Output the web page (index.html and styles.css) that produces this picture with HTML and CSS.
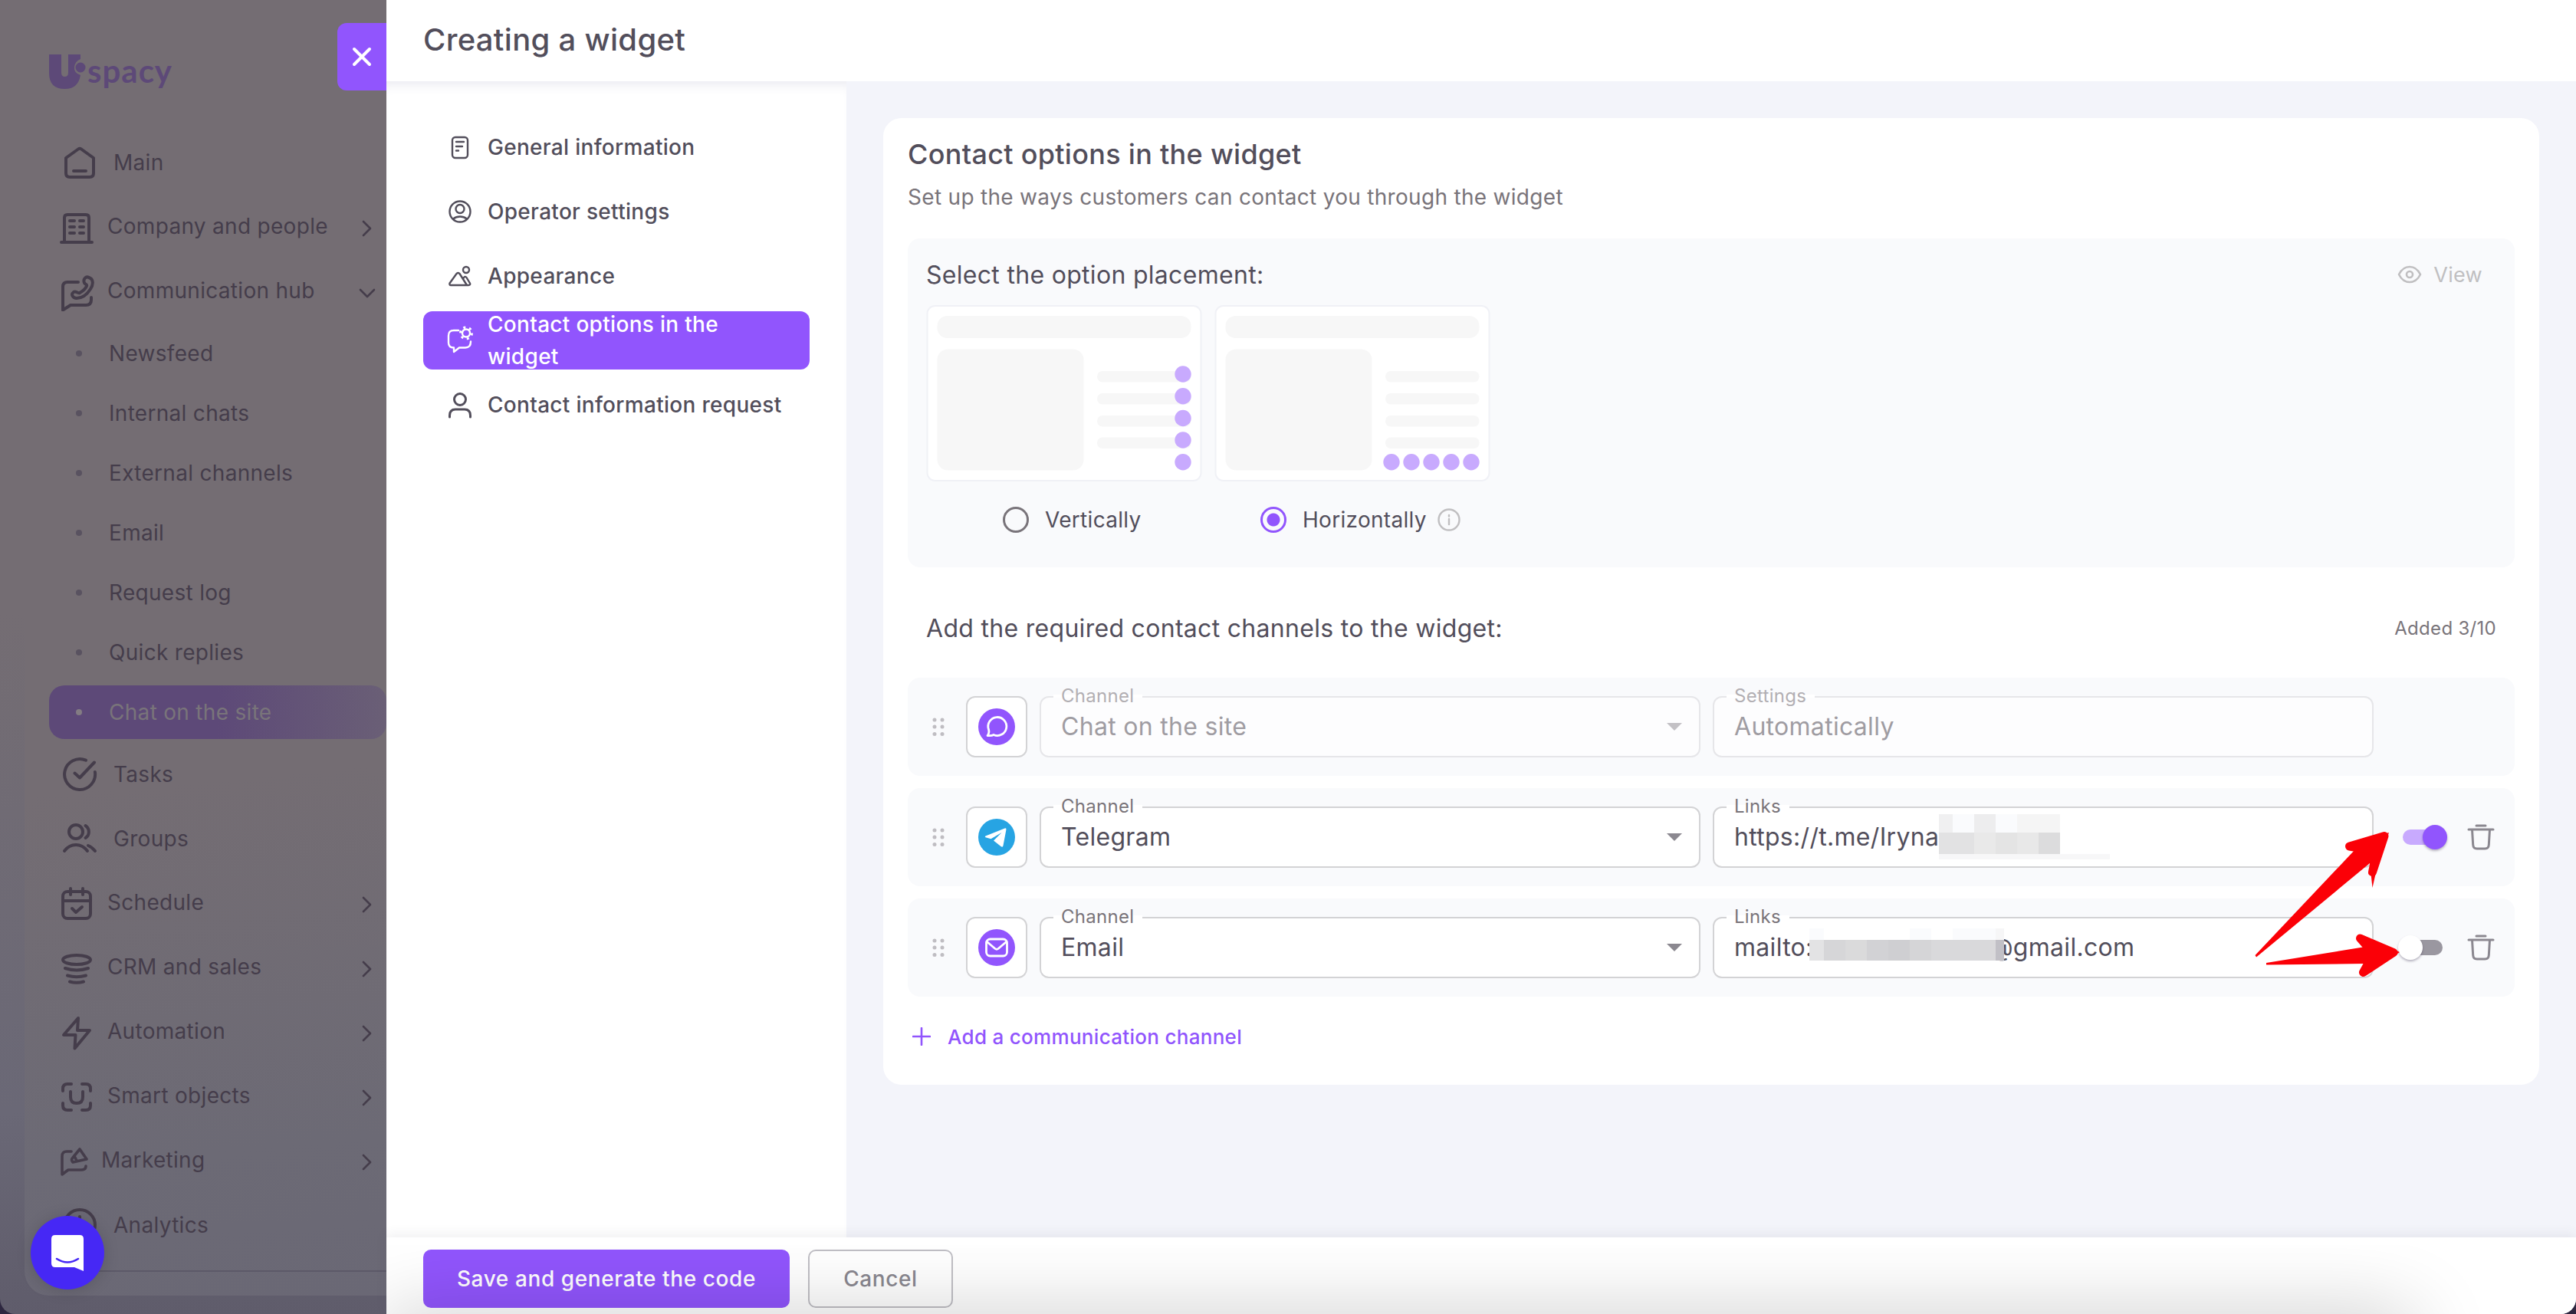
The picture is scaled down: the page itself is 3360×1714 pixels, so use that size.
FILE: index.html
```html
<!DOCTYPE html>
<html lang="en">
<head>
  <meta charset="UTF-8" />
  <title>Creating a widget</title>
  <link rel="stylesheet" href="styles.css">
</head>
<body>

<div class="app">
  <aside class="sidebar">
    <div class="sidebar-panel">
      <div class="logo">
        <svg width="50" height="48" viewBox="0 0 50 48">
          <path d="M0 2H16V26Q16 31 20.500 31Q25 31 25 26V2H41V8Q34 11 33 18Q32 26 41 29Q38 47 20.500 47Q0 47 0 26Z" />
          <circle cx="41" cy="19" r="6.500" />
        </svg>
        <span class="logo-text">spacy</span>
      </div>

      <nav class="menu">
        <div class="menu-row wide">
          <svg class="icon" viewBox="0 0 48 48"><path d="M6 18 22 6.500Q24 5 26 6.500L42 18V38Q42 43 37 43H11Q6 43 6 38ZM16 35H32" /></svg>
          <span>Main</span>
        </div>
        <div class="menu-row expand">
          <svg class="icon" viewBox="0 0 48 48"><path d="M8 42V10Q8 6 12 6H36Q40 6 40 10V42M4 42H44M15 14H21M28 14H33M15 22H21M28 22H33M15 30H21M28 30H33" /></svg>
          <span>Company and people</span>
          <svg class="chevron" viewBox="0 0 24 24"><path d="M7 3 16 12 7 21" /></svg>
        </div>
        <div class="menu-row expand opened">
          <svg class="icon" viewBox="0 0 48 48"><path d="M26 10H12Q6 10 6 16V46.500L16 40H36Q43 40 43 33V30M34 11C32 6 36 2 40 4C46 6 46 13 42 19C37 27 30 31 24 31C19 31 16 26 20 23C23 21 25 25 28 24C33 21 36 18 37 15C38 13 35 13 34 11Z" /></svg>
          <span>Communication hub</span>
          <svg class="chevron" viewBox="0 0 24 24"><path d="M3 8 12 17 21 8" /></svg>
        </div>
        <div class="sub-row"><i></i>Newsfeed</div>
        <div class="sub-row"><i></i>Internal chats</div>
        <div class="sub-row"><i></i>External channels</div>
        <div class="sub-row"><i></i>Email</div>
        <div class="sub-row"><i></i>Request log</div>
        <div class="sub-row"><i></i>Quick replies</div>
        <div class="sub-row current"><i></i>Chat on the site</div>
        <div class="menu-row wide">
          <svg class="icon" viewBox="0 0 48 48"><path d="M32 5.600A20 20 0 1 0 43.900 21M17.500 22.500 24 28.500 43 8.500" /></svg>
          <span>Tasks</span>
        </div>
        <div class="menu-row wide">
          <svg class="icon" viewBox="0 0 48 48"><circle cx="19" cy="15" r="9" /><path d="M31.500 7A9.500 9.500 0 0 1 31.500 23M4 40Q10 32 19 32T34 40M35 33Q40 35 44 40" /></svg>
          <span>Groups</span>
        </div>
        <div class="menu-row expand">
          <svg class="icon" viewBox="0 0 48 48"><rect x="6" y="7" width="36" height="35" rx="6" /><path d="M6 19H42M16 3V11M32 3V11M18 29 23 34 31 27" /></svg>
          <span>Schedule</span>
          <svg class="chevron" viewBox="0 0 24 24"><path d="M7 3 16 12 7 21" /></svg>
        </div>
        <div class="menu-row expand">
          <svg class="icon" viewBox="0 0 48 48"><ellipse cx="24" cy="12" rx="18" ry="6" /><path d="M9 23Q24 28 39 23M12 32.500Q24 36 36 32.500M15 40.500Q24 43 33 40.500" /></svg>
          <span>CRM and sales</span>
          <svg class="chevron" viewBox="0 0 24 24"><path d="M7 3 16 12 7 21" /></svg>
        </div>
        <div class="menu-row expand">
          <svg class="icon" viewBox="0 0 48 48"><path d="M26 4 7 26H22.500L21.500 43.500 41 20H25Z" /></svg>
          <span>Automation</span>
          <svg class="chevron" viewBox="0 0 24 24"><path d="M7 3 16 12 7 21" /></svg>
        </div>
        <div class="menu-row expand">
          <svg class="icon" viewBox="0 0 48 48"><path d="M6 15V12Q6 6 12 6H17M31 6H36Q42 6 42 12V15M42 31V34Q42 40 36 40H31M17 40H12Q6 40 6 34V31M16 16V23Q16 31 24 31T32 23V16" /></svg>
          <span>Smart objects</span>
          <svg class="chevron" viewBox="0 0 24 24"><path d="M7 3 16 12 7 21" /></svg>
        </div>
        <div class="menu-row expand small">
          <svg class="icon" viewBox="0 0 40 40"><path d="M17 6H11Q5 6 5 12V36L13 30H30Q36 30 36 25M28 3 37 16 19 20Q16 17 19 14ZM21 12 24 18" /></svg>
          <span>Marketing</span>
          <svg class="chevron" viewBox="0 0 24 24"><path d="M7 3 16 12 7 21" /></svg>
        </div>
        <div class="menu-row wide">
          <svg class="icon" viewBox="0 0 48 48"><circle cx="24" cy="24" r="20" /><path d="M24 13V24L32 32" /></svg>
          <span>Analytics</span>
        </div>
      </nav>
      <div class="menu-line"></div>
    </div>

    <button class="close-btn">
      <svg width="28" height="28" viewBox="0 0 28 28"><path d="M4 4 24 24M24 4 4 24" /></svg>
    </button>
    <button class="launcher">
      <svg width="42" height="47" viewBox="0 0 42 47">
        <path class="launcher-bubble" d="M5 0H37Q42 0 42 5V47L30 42H5Q0 42 0 37V5Q0 0 5 0Z" />
        <path class="launcher-smile" d="M7 31Q21 40 35 31" />
      </svg>
    </button>
  </aside>

  <main class="drawer">
    <header class="drawer-header">Creating a widget</header>

    <div class="drawer-body">
      <nav class="steps">
        <div class="step">
          <svg viewBox="0 0 32 32"><rect x="6" y="3" width="20" height="27" rx="4" /><path d="M11 9H21M11 15H19M11 20.500H14" /></svg>
          <span>General information</span>
        </div>
        <div class="step">
          <svg viewBox="0 0 32 32"><circle cx="16" cy="16" r="13.500" /><circle cx="16" cy="12.500" r="5.500" /><path d="M7 25.500Q11 22.500 16 22.500T25 25.500" /></svg>
          <span>Operator settings</span>
        </div>
        <div class="step">
          <svg viewBox="0 0 32 32"><path d="M11.500 13Q13.500 11 15.500 13L25 28H4Q2 28 2.500 25.500ZM20 20Q22 15 24.500 18L29 25.500Q30 28 27 28H25" /><circle cx="24" cy="8" r="4" /></svg>
          <span>Appearance</span>
        </div>
        <div class="step active">
          <svg viewBox="0 0 32 32"><path d="M14 3H8Q1 3 1 10V19Q1 25.500 8 25.500V31L15 25.500H23Q30 25.500 30 17.500" /><circle cx="24" cy="6.500" r="5" /><circle class="gear-teeth" cx="24" cy="6.500" r="7.500" /></svg>
          <span>Contact options in the widget</span>
        </div>
        <div class="step">
          <svg viewBox="0 0 32 32" class="bold"><circle cx="16" cy="9" r="7.500" /><path d="M2.500 32V30Q2.500 22 10 22H22Q29.500 22 29.500 30V32" /></svg>
          <span>Contact information request</span>
        </div>
      </nav>

      <section class="content">
        <div class="card">
          <h2>Contact options in the widget</h2>
          <p class="subtitle">Set up the ways customers can contact you through the widget</p>

          <div class="placement">
            <div class="placement-head">
              <span class="section-title">Select the option placement:</span>
              <span class="view-btn">
                <svg width="32" height="24" viewBox="0 0 32 24"><path d="M2 12Q7 2 16 2T30 12Q25 22 16 22T2 12Z" /><circle cx="16" cy="12" r="4" /></svg>
                View
              </span>
            </div>
            <div class="options">
              <div class="option">
                <svg class="preview" viewBox="0 0 360 230">
                  <rect class="frame" x="1.500" y="1" width="357" height="228" rx="10" />
                  <g class="blank">
                    <rect x="14.500" y="14" width="331" height="29" rx="13" />
                    <rect x="14.500" y="57.500" width="191" height="158" rx="14" />
                    <rect x="223" y="86" width="122.500" height="14.500" rx="7" />
                    <rect x="223" y="115" width="122.500" height="14.500" rx="7" />
                    <rect x="223" y="144" width="122.500" height="14.500" rx="7" />
                    <rect x="223" y="172.500" width="122.500" height="14.500" rx="7" />
                  </g>
                  <g class="dots">
                    <circle cx="335" cy="90" r="10.700" />
                    <circle cx="335" cy="118.700" r="10.700" />
                    <circle cx="335" cy="147.500" r="10.700" />
                    <circle cx="335" cy="176" r="10.700" />
                    <circle cx="335" cy="204.700" r="10.700" />
                  </g>
                </svg>
                <label class="radio-row vertical"><i class="radio"></i>Vertically</label>
              </div>
              <div class="option">
                <svg class="preview" viewBox="0 0 360 230">
                  <rect class="frame" x="1.500" y="1" width="357" height="228" rx="10" />
                  <g class="blank">
                    <rect x="14.500" y="14" width="331" height="29" rx="13" />
                    <rect x="14.500" y="57.500" width="191" height="158" rx="14" />
                    <rect x="223" y="86" width="122.500" height="14.500" rx="7" />
                    <rect x="223" y="115" width="122.500" height="14.500" rx="7" />
                    <rect x="223" y="144" width="122.500" height="14.500" rx="7" />
                    <rect x="223" y="172.500" width="122.500" height="14.500" rx="7" />
                  </g>
                  <g class="dots">
                    <circle cx="231" cy="204.700" r="10.700" />
                    <circle cx="257" cy="204.700" r="10.700" />
                    <circle cx="283" cy="204.700" r="10.700" />
                    <circle cx="309" cy="204.700" r="10.700" />
                    <circle cx="335" cy="204.700" r="10.700" />
                  </g>
                </svg>
                <label class="radio-row horizontal"><i class="radio checked"></i>Horizontally
                  <svg class="info" width="30" height="30" viewBox="0 0 30 30"><circle cx="15" cy="15" r="13.500" /><path d="M15 14V21M15 9V10.500" /></svg>
                </label>
              </div>
            </div>
          </div>

          <div class="channels-head">
            <span class="section-title">Add the required contact channels to the widget:</span>
            <span class="added">Added 3/10</span>
          </div>

          <div class="channels">
            <div class="channel">
              <svg class="grip" viewBox="0 0 16 24"><circle cx="3" cy="3" r="2.500" /><circle cx="13" cy="3" r="2.500" /><circle cx="3" cy="12" r="2.500" /><circle cx="13" cy="12" r="2.500" /><circle cx="3" cy="21.500" r="2.500" /><circle cx="13" cy="21.500" r="2.500" /></svg>
              <div class="channel-icon">
                <svg viewBox="0 0 48 48"><circle cx="24" cy="24" r="24" class="violet" /><path class="line" d="M13.500 27.500A12 12 0 1 1 20 34.500C17.500 36 14.500 35.500 12 35.500C14 33 14.500 31 13.500 27.500Z" /></svg>
              </div>
              <div class="field disabled">
                <span class="field-label">Channel</span>
                <span class="field-value">Chat on the site</span>
                <i class="caret"></i>
              </div>
              <div class="field disabled">
                <span class="field-label">Settings</span>
                <span class="field-value">Automatically</span>
              </div>
            </div>

            <div class="channel">
              <svg class="grip" viewBox="0 0 16 24"><circle cx="3" cy="3" r="2.500" /><circle cx="13" cy="3" r="2.500" /><circle cx="3" cy="12" r="2.500" /><circle cx="13" cy="12" r="2.500" /><circle cx="3" cy="21.500" r="2.500" /><circle cx="13" cy="21.500" r="2.500" /></svg>
              <div class="channel-icon">
                <svg viewBox="0 0 48 48"><circle cx="24" cy="24" r="24" class="blue" /><path class="solid" d="M9.500 22.500 34.500 12.400Q37 11.800 36.400 14.500L32.500 35Q32 37.500 29.800 36.200L20 28.500 30.500 18 16.500 26.200 9.500 24.200Q8 23.400 9.500 22.500Z" /></svg>
              </div>
              <div class="field">
                <span class="field-label">Channel</span>
                <span class="field-value">Telegram</span>
                <i class="caret"></i>
              </div>
              <div class="field">
                <span class="field-label">Links</span>
                <span class="field-value">https://t.me/Iryna</span>
                <svg class="mosaic" width="224" height="60" viewBox="0 0 224 60" shape-rendering="crispEdges">
                  <rect width="18" height="24" fill="#f0f0f1" /><rect x="18" width="28" height="24" fill="#fafbfd" /><rect x="46" width="28" height="24" fill="#ededee" /><rect x="74" width="28" height="24" fill="#fafbfd" /><rect x="102" width="56" height="24" fill="#f5f5f5" />
                  <rect y="24" width="46" height="28" fill="#e2e2e3" /><rect x="46" y="24" width="28" height="28" fill="#e9e9e9" /><rect x="74" y="24" width="28" height="28" fill="#e4e4e4" /><rect x="102" y="24" width="28" height="28" fill="#e8e8e8" /><rect x="130" y="24" width="28" height="28" fill="#dcdcdd" />
                  <rect y="52" width="223" height="7" fill="#f7f7f8" />
                </svg>
              </div>
              <i class="toggle on"></i>
              <svg class="trash" viewBox="0 0 40 40"><path d="M14 5H26M4 10H36M8.500 10 9.700 30Q10 35 14.700 35H25.300Q30 35 30.300 30L31.500 10" /></svg>
            </div>

            <div class="channel">
              <svg class="grip" viewBox="0 0 16 24"><circle cx="3" cy="3" r="2.500" /><circle cx="13" cy="3" r="2.500" /><circle cx="3" cy="12" r="2.500" /><circle cx="13" cy="12" r="2.500" /><circle cx="3" cy="21.500" r="2.500" /><circle cx="13" cy="21.500" r="2.500" /></svg>
              <div class="channel-icon">
                <svg viewBox="0 0 48 48"><circle cx="24" cy="24" r="24" class="violet" /><rect class="line" x="10.500" y="13" width="27" height="22" rx="5" /><path class="line" d="M12 17 22 25.500Q24 27 26 25.500L36 17" /></svg>
              </div>
              <div class="field">
                <span class="field-label">Channel</span>
                <span class="field-value">Email</span>
                <i class="caret"></i>
              </div>
              <div class="field">
                <span class="field-label">Links</span>
                <span class="field-value">mailto:</span>
                <svg class="mosaic mosaic-mail" width="254" height="42" viewBox="0 0 254 42" shape-rendering="crispEdges">
                  <rect width="254" height="42" fill="#fff" />
                  <rect width="19" height="15" fill="#fafbfd" /><rect x="131" width="28" height="15" fill="#fafbfd" /><rect x="187" width="56" height="15" fill="#fafbfd" /><rect x="243" width="11" height="15" fill="#f6f6f7" />
                  <rect y="15" width="19" height="27" fill="#e3e3e4" /><rect x="19" y="15" width="28" height="27" fill="#d6d6d8" /><rect x="47" y="15" width="28" height="27" fill="#dadadb" /><rect x="75" y="15" width="28" height="27" fill="#d2d2d5" /><rect x="103" y="15" width="28" height="27" fill="#cfcfd2" /><rect x="131" y="15" width="28" height="27" fill="#d5d5d7" /><rect x="159" y="15" width="84" height="27" fill="#d9d9db" /><rect x="243" y="15" width="11" height="27" fill="#c1c0c6" />
                </svg>
                <span class="field-value">@gmail.com</span>
              </div>
              <i class="toggle"></i>
              <svg class="trash" viewBox="0 0 40 40"><path d="M14 5H26M4 10H36M8.500 10 9.700 30Q10 35 14.700 35H25.300Q30 35 30.300 30L31.500 10" /></svg>
            </div>

            <!-- red pointers to the toggles -->
            <svg class="pointers" width="200" height="200" viewBox="2935 1080 200 200">
              <path d="M2941.500 1246 3073 1107 3064.500 1104 3110 1089 3094.500 1158 3091 1126 2943 1248.500Z" />
              <path class="barb" d="M3064.500 1104 3110 1090.500 3094.500 1137.500 3100 1110Z" />
              <path d="M3110 1088 3116 1086 3113 1095Z" />
              <path d="M2956 1256 3082 1235.500 3078.500 1225 3123 1242.500 3082 1268 3085 1257 2956 1258.500Z" />
              <path class="barb" d="M3078.500 1224 3122 1242.500 3082.500 1268.500 3096 1244Z" />
              <path d="M3121 1237.500 3130 1242 3122 1247.500Z" />
            </svg>
          </div>

          <div class="add-channel">
            <svg width="24" height="24" viewBox="0 0 24 24"><path d="M12 1V23M1 12H23" /></svg>
            Add a communication channel
          </div>
        </div>
      </section>
    </div>

    <footer class="drawer-footer">
      <button class="btn save">Save and generate the code</button>
      <button class="btn cancel">Cancel</button>
    </footer>
    <div class="bottom-shade"></div>
  </main>
</div>

</body>
</html>
```
FILE: styles.css
```css
* {
  box-sizing: border-box;
}

html {
  background: #2e2740;
}

body {
  margin: 0;
  font-family: Inter, "Liberation Sans", sans-serif;
  font-size: 28px;
  letter-spacing: 0.3px;
  color: #524e5b;
}

svg {
  flex-shrink: 0;
  fill: none;
  stroke: currentColor;
  stroke-linecap: round;
  stroke-linejoin: round;
}

button {
  border: none;
  padding: 0;
  font: inherit;
  letter-spacing: inherit;
  cursor: pointer;
}

.app {
  display: flex;
  width: 3360px;
  height: 1714px;
  overflow: hidden;
  border-radius: 0 0 20px 20px;
}

/* sidebar */
.sidebar {
  position: relative;
  width: 504px;
  flex-shrink: 0;
  padding-left: 32px;
  background: linear-gradient(#746d73 0, #746d73 800px, #6a6876 1450px, #5f5c6b 100%);
  color: #453d4b;
}

.sidebar-panel {
  height: 1690px;
  padding: 69px 0 0 32px;
  border-radius: 0 0 0 32px;
  background: linear-gradient(175deg, #746d73 0, #746d73 60%, #6c6a75 88%, #6a6875 100%);
}

.logo {
  display: flex;
  height: 101px;
  color: #5d4978;
}

.logo svg {
  fill: currentColor;
  stroke: none;
}

.logo-text {
  font-family: Lato, sans-serif;
  font-weight: bold;
  font-size: 42px;
  line-height: 46px;
  letter-spacing: 1px;
}

.menu-row {
  display: flex;
  align-items: center;
  gap: 16px;
  height: 84px;
  padding-left: 12px;
}

.menu-row.wide {
  gap: 20px;
  padding-left: 16px;
}

.menu-row.expand {
  padding-top: 3px;
  padding-right: 13px;
}

.menu-row.expand span {
  flex: 1;
  margin-bottom: 5px;
}

.icon {
  width: 48px;
  height: 48px;
  stroke-width: 4;
}

.menu-row.small .icon {
  width: 40px;
  height: 40px;
  stroke-width: 3.6;
}

.chevron {
  width: 24px;
  height: 24px;
  stroke-width: 2.6;
}

.sub-row {
  display: flex;
  align-items: center;
  height: 70px;
  margin: 4px 0 8px;
  padding-left: 35px;
}

.sub-row i {
  width: 8px;
  height: 8px;
  margin-right: 35px;
  border-radius: 50%;
  background: #595260;
}

.sub-row.current {
  margin-bottom: 4px;
  border-radius: 20px;
  background: linear-gradient(90deg, #5d4978 0, #5d4978 50%, #6a5f76 100%);
  color: #79747a;
}

.sub-row.current i {
  background: #837c83;
}

.menu-line {
  height: 2px;
  margin-top: 17px;
  background: #5c5968;
}

.close-btn {
  position: absolute;
  top: 30px;
  right: 0;
  width: 64px;
  height: 88px;
  border-radius: 12px 0 0 12px;
  background: #9155fd;
  color: #fff;
}

.close-btn svg {
  display: block;
  margin: 0 auto;
  stroke-width: 4;
}

.launcher {
  position: absolute;
  left: 40px;
  top: 1586px;
  width: 96px;
  height: 96px;
  border-radius: 50%;
  background: #4628f5;
  box-shadow: 0 2px 20px rgba(0, 0, 0, 0.15);
}

.launcher svg {
  display: block;
  margin: 0 auto;
}

.launcher-bubble {
  fill: #fff;
  stroke: none;
}

.launcher-smile {
  stroke: #4628f5;
  stroke-width: 2.6;
}

/* drawer */
.drawer {
  position: relative;
  flex: 1;
  display: flex;
  flex-direction: column;
  background: #f3f4fa;
}

.drawer-header {
  position: relative;
  z-index: 1;
  height: 106px;
  padding-left: 48px;
  background: #fff;
  font-size: 40px;
  font-weight: 500;
  line-height: 103px;
}

.drawer-body {
  flex: 1;
  display: flex;
}

.steps {
  width: 600px;
  padding: 48px;
  display: flex;
  flex-direction: column;
  gap: 8px;
  background: #fff;
  box-shadow: inset 0 14px 16px -10px #e9e9f0;
}

.step {
  display: flex;
  align-items: center;
  gap: 20px;
  height: 76px;
  padding: 0 32px;
  border-radius: 12px;
  font-weight: 500;
  line-height: 42px;
}

.step svg {
  width: 32px;
  height: 32px;
  stroke-width: 2.4;
  overflow: visible;
}

.step svg.bold {
  stroke-width: 3;
}

.step.active {
  background: #9155fd;
  color: #fff;
}

.gear-teeth {
  stroke-width: 3;
  stroke-dasharray: 3 4.850;
  stroke-linecap: butt;
}

.content {
  flex: 1;
  padding: 48px;
}

.card {
  height: 1261px;
  padding: 24px 32px 0;
  border-radius: 24px;
  background: #fff;
}

.card h2 {
  margin: 0 0 12px;
  font-size: 36px;
  font-weight: 500;
  line-height: 46px;
}

.subtitle {
  margin: 0 0 33px;
  line-height: 42px;
  color: #79747a;
}

.placement {
  height: 429px;
  padding: 25px 24px 0;
  border-radius: 16px;
  background: #f9fafc;
}

.placement-head {
  display: flex;
  justify-content: space-between;
  align-items: center;
  height: 44px;
  margin-bottom: 18px;
}

.section-title {
  font-size: 32px;
}

.view-btn {
  display: flex;
  align-items: center;
  gap: 15px;
  margin-right: 18px;
  font-size: 27px;
  color: #c0bfc1;
}

.view-btn svg {
  stroke-width: 2.6;
}

.options {
  display: flex;
  gap: 16px;
}

.preview {
  display: block;
  width: 360px;
  height: 230px;
}

.frame {
  fill: #fff;
  stroke: #f0f1f6;
  stroke-width: 2;
}

.blank {
  fill: #f7f7f7;
  stroke: none;
}

.dots {
  fill: #c8aafe;
  stroke: none;
}

.radio-row {
  display: flex;
  align-items: center;
  height: 40px;
  margin-top: 30px;
}

.radio-row.vertical {
  padding-left: 100px;
}

.radio-row.horizontal {
  padding-left: 60px;
}

.radio {
  width: 34px;
  height: 34px;
  margin-right: 21px;
  border: 3px solid #79747a;
  border-radius: 50%;
}

.radio.checked {
  border-color: #9155fd;
  background: radial-gradient(circle, #9155fd 8px, transparent 9px);
}

.info {
  margin-left: 14px;
  color: #c0bfc1;
  stroke-width: 2.4;
}

.channels-head {
  display: flex;
  justify-content: space-between;
  align-items: center;
  height: 44px;
  margin: 57px 24px 43px;
}

.added {
  font-size: 24px;
  color: #79747a;
}

.channels {
  position: relative;
  display: flex;
  flex-direction: column;
  gap: 16px;
}

.channel {
  display: flex;
  align-items: center;
  height: 128px;
  padding-left: 32px;
  border-radius: 16px;
  background: #f9fafc;
}

.grip {
  width: 16px;
  height: 24px;
  margin-right: 28px;
  fill: #bfbdc2;
  stroke: none;
}

.channel-icon {
  display: flex;
  align-items: center;
  justify-content: center;
  width: 80px;
  height: 80px;
  border: 2px solid #d3d3d5;
  border-radius: 12px;
  background: #fff;
}

.channel-icon svg {
  width: 48px;
  height: 48px;
}

.violet {
  fill: #9155fd;
  stroke: none;
}

.blue {
  fill: #27a4e3;
  stroke: none;
}

.line {
  stroke: #fff;
  stroke-width: 2.8;
}

.solid {
  fill: #fff;
  stroke: none;
}

.field {
  position: relative;
  display: flex;
  align-items: center;
  width: 862px;
  height: 80px;
  margin-left: 16px;
  padding: 0 24px 0 26px;
  border: 2px solid #d3d3d5;
  border-radius: 12px;
  background: #fff;
}

.field-label {
  position: absolute;
  top: -17px;
  left: 16px;
  padding: 0 11px 0 10px;
  font-size: 24px;
  line-height: 30px;
  letter-spacing: 0.3px;
  color: #79747a;
  background: linear-gradient(#fff, #fff) no-repeat 0 center / 100% 4px;
}

.field-value {
  font-size: 32px;
  line-height: 46px;
}

.field.disabled {
  border-color: #e6e6e9;
  background: #fdfdfe;
  color: #9f9ca2;
}

.field.disabled .field-label {
  color: #b2afb3;
}

.caret {
  margin-left: auto;
  border: 10px solid transparent;
  border-top-color: #8b8890;
  border-bottom: none;
  margin-right: -2px;
}

.field.disabled .caret {
  border-top-color: #c3c1c5;
}

.mosaic {
  stroke: none;
}

.mosaic-mail {
  position: relative;
  z-index: 1;
  margin: -8px -19px 0 -5px;
}

.toggle {
  position: relative;
  width: 52px;
  height: 20px;
  margin: 0 30px 0 38px;
  border-radius: 10px;
  background: #9a97a0;
}

.toggle::after {
  content: "";
  position: absolute;
  top: -6px;
  left: -6px;
  width: 32px;
  height: 32px;
  border-radius: 50%;
  background: #fff;
  box-shadow: 0 2px 3px rgba(60, 50, 80, 0.35);
}

.toggle.on {
  background: #c8aafe;
}

.toggle.on::after {
  left: 26px;
  background: #9155fd;
}

.trash {
  width: 40px;
  height: 40px;
  color: #8b8890;
  stroke-width: 3;
}

.pointers {
  position: absolute;
  left: 1751px;
  top: 196px;
  fill: #fb0007;
  stroke: none;
}

.barb {
  stroke: #fb0007;
  stroke-width: 11;
}

.add-channel {
  display: flex;
  align-items: center;
  gap: 22px;
  height: 40px;
  margin-top: 32px;
  padding-left: 6px;
  font-size: 26px;
  font-weight: 500;
  color: #9155fd;
}

.add-channel svg {
  stroke-width: 2.6;
}

.drawer-footer {
  display: flex;
  gap: 24px;
  height: 100px;
  padding: 16px 48px;
  background: #fff;
  box-shadow: 0 -4px 14px rgba(70, 60, 80, 0.08);
}

.btn {
  height: 76px;
  border-radius: 10px;
  font-weight: 500;
  letter-spacing: 0.6px;
}

.save {
  width: 478px;
  background: #9155fd;
  color: #fff;
}

.cancel {
  width: 189px;
  border: 2px solid #c0bfc5;
  background: transparent;
  color: #8a8890;
}

.bottom-shade {
  position: absolute;
  left: 0;
  bottom: -60px;
  width: 2640px;
  height: 50px;
  border-radius: 40px;
  box-shadow: 0 0 100px 10px rgba(0, 0, 0, 0.22);
  clip-path: inset(-100px -200px -10px 0);
}
```
